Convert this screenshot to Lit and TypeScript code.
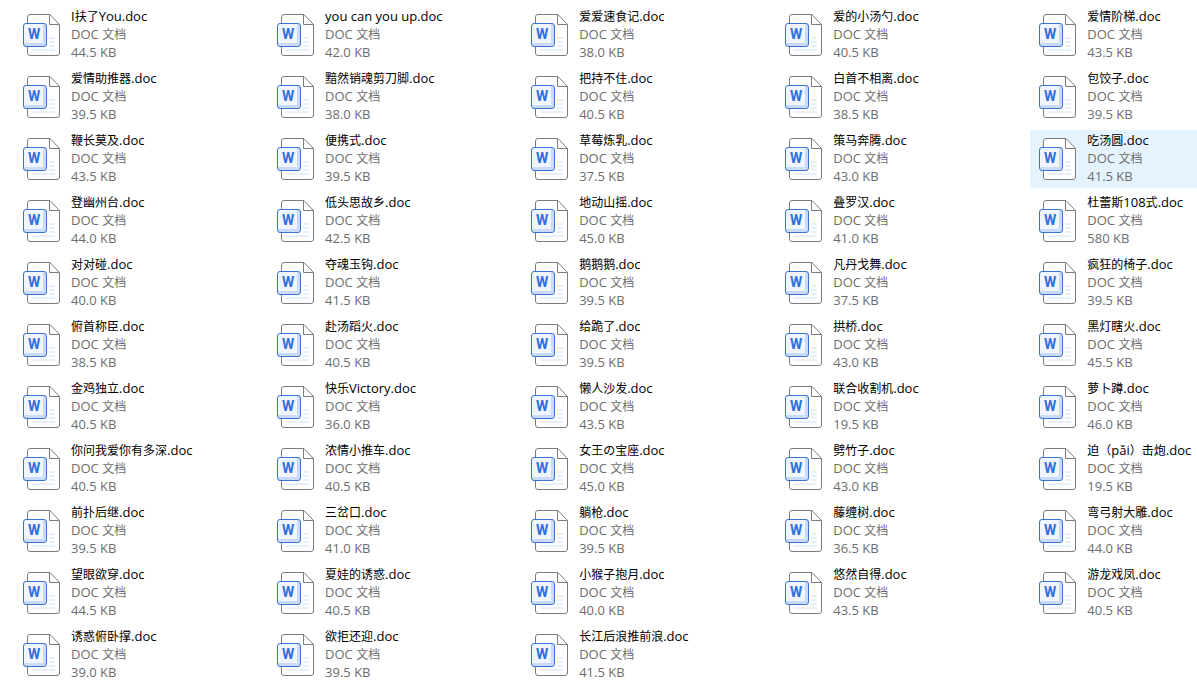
import { LitElement, html, css, svg } from "lit";
import { customElement, property, state } from "lit/decorators.js";

interface DocFile {
  name: string;
  size: string;
}

const file = (name: string, size: string): DocFile => ({ name: `${name}.doc`, size: `${size} KB` });

const FILES: DocFile[] = [
  file("I扶了You", "44.5"), file("you can you up", "42.0"), file("爱爱速食记", "38.0"), file("爱的小汤勺", "40.5"), file("爱情阶梯", "43.5"),
  file("爱情助推器", "39.5"), file("黯然销魂剪刀脚", "38.0"), file("把持不住", "40.5"), file("白首不相离", "38.5"), file("包饺子", "39.5"),
  file("鞭长莫及", "43.5"), file("便携式", "39.5"), file("草莓炼乳", "37.5"), file("策马奔腾", "43.0"), file("吃汤圆", "41.5"),
  file("登幽州台", "44.0"), file("低头思故乡", "42.5"), file("地动山摇", "45.0"), file("叠罗汉", "41.0"), file("杜蕾斯108式", "580"),
  file("对对碰", "40.0"), file("夺魂玉钩", "41.5"), file("鹅鹅鹅", "39.5"), file("凡丹戈舞", "37.5"), file("疯狂的椅子", "39.5"),
  file("俯首称臣", "38.5"), file("赴汤蹈火", "40.5"), file("给跪了", "39.5"), file("拱桥", "43.0"), file("黑灯瞎火", "45.5"),
  file("金鸡独立", "40.5"), file("快乐Victory", "36.0"), file("懒人沙发", "43.5"), file("联合收割机", "19.5"), file("萝卜蹲", "46.0"),
  file("你问我爱你有多深", "40.5"), file("浓情小推车", "40.5"), file("女王の宝座", "45.0"), file("劈竹子", "43.0"), file("迫（pǎi）击炮", "19.5"),
  file("前扑后继", "39.5"), file("三岔口", "41.0"), file("躺枪", "39.5"), file("藤缠树", "36.5"), file("弯弓射大雕", "44.0"),
  file("望眼欲穿", "44.5"), file("夏娃的诱惑", "40.5"), file("小猴子抱月", "40.0"), file("悠然自得", "43.5"), file("游龙戏凤", "40.5"),
  file("诱惑俯卧撑", "39.0"), file("欲拒还迎", "39.5"), file("长江后浪推前浪", "41.5"),
];

/** Latin runs are set one step larger than the Han characters beside them. */
const mixed = (text: string) =>
  (text.match(/[\u0000-\u02ff]+|[^\u0000-\u02ff]+/g) ?? []).map((run) =>
    run.charCodeAt(0) < 0x300 ? html`<span class="latin">${run}</span>` : run
  );

const pageShape = svg`
  <path d="M8 1.5H28L37.5 11.5V40A2.5 2.5 0 0 1 35 42.5H8A2.5 2.5 0 0 1 5.5 40V4A2.5 2.5 0 0 1 8 1.5Z" fill="#fff" stroke="#7c7c7e"/>
  <path d="M27.5 1.5V11.5H37.5" fill="none" stroke="#7c7c7e"/>
  <path d="M27 25H33M27 29H33M27 33H33M10 37H33" stroke="#e6f0fb" stroke-width="2"/>`;

const badgeShape = svg`
  <rect x="1.5" y="10.5" width="23" height="23" rx="2.5" fill="#f0f5ff"/>
  <path d="M21 11H24V33H2V30H21Z" fill="#c9dafa"/>
  <rect x="1.5" y="10.5" width="23" height="23" rx="2.5" fill="none" stroke="#3a74cf"/>`;

@customElement("doc-item")
export class DocItem extends LitElement {
  @property({ attribute: false }) doc!: DocFile;
  @property({ type: Boolean, reflect: true }) active = false;

  static styles = css`
    :host {
      display: block;
      min-width: 0;
    }
    .item {
      display: flex;
      align-items: center;
      gap: 9px;
      width: 100%;
      box-sizing: border-box;
      padding: 1px 0 3px 8px;
      border: 0;
      background: none;
      color: #000;
      font: 12px/18px "Open Sans", "Noto Sans CJK SC", sans-serif;
      text-align: left;
      white-space: nowrap;
    }
    :host([active]) .item {
      background: #e5f3ff;
    }
    .icon {
      flex: none;
      width: 40px;
      height: 46px;
    }
    .letter {
      font: bold 14px Roboto, sans-serif;
      fill: #2f6fde;
      text-anchor: middle;
    }
    .text {
      display: grid;
      grid-auto-rows: 18px;
    }
    .meta {
      color: #6d6d6d;
    }
    .latin {
      font-size: 13px;
    }
  `;

  render() {
    return html`
      <button class="item" type="button" aria-pressed=${this.active ? "true" : "false"}>
        <svg class="icon" viewBox="0 -2 40 46" aria-hidden="true">
          ${pageShape}${badgeShape}
          <text class="letter" x="12" y="26">W</text>
        </svg>
        <span class="text">
          <span>${mixed(this.doc.name)}</span>
          <span class="meta">${mixed("DOC 文档")}</span>
          <span class="meta">${mixed(this.doc.size)}</span>
        </span>
      </button>
    `;
  }
}

@customElement("app-root")
export class AppRoot extends LitElement {
  @state() private current = 14;

  static styles = css`
    :host {
      display: block;
      min-height: 100vh;
      box-sizing: border-box;
      padding: 6px 0 6px 14px;
      background: #fff;
    }
    .files {
      display: grid;
      grid-template-columns: repeat(4, minmax(0, 3fr)) minmax(0, 2fr);
      gap: 4px;
    }
  `;

  render() {
    return html`
      <main class="files">
        ${FILES.map(
          (doc, i) => html`<doc-item .doc=${doc} ?active=${i === this.current} @click=${() => (this.current = i)}></doc-item>`
        )}
      </main>
    `;
  }
}
